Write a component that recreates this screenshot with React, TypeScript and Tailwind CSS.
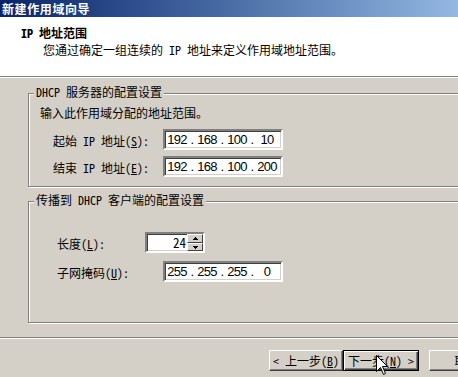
import React, { Fragment } from "react";

const sunken =
  "border-2 border-t-[#808080] border-l-[#808080] border-b-white border-r-white shadow-[inset_1px_1px_0_#404040,inset_-1px_-1px_0_#d4d0c8]";

function Ip({ v }: { v: string[] }) {
  return (
    <div className={`w-[120px] h-[21px] bg-white flex items-center ${sunken} font-['Liberation_Sans',sans-serif] text-[13px] tracking-[-0.8px] leading-none`}>
      {v.map((x, i) => (
        <Fragment key={i}>
          {i > 0 && <span className="w-[6px] text-center">.</span>}
          <span className="w-[24px] text-center">{x}</span>
        </Fragment>
      ))}
    </div>
  );
}

function U({ c }: { c: string }) {
  return <span className="underline underline-offset-[1px]">{c}</span>;
}

function Group({
  label,
  className,
  children,
}: {
  label: string;
  className: string;
  children: React.ReactNode;
}) {
  return (
    <div
      className={`relative border border-[#808080] shadow-[inset_1px_1px_0_#ffffff,1px_1px_0_#ffffff] ${className}`}
    >
      <div className="absolute left-[5px] top-[-8px] px-[2px] bg-[#d4d0c8] leading-[12px]">{label}</div>
      {children}
    </div>
  );
}

function Btn({
  children,
  def,
  className,
}: {
  children: React.ReactNode;
  def?: boolean;
  className: string;
}) {
  return (
    <div
      className={
        def
          ? `h-[21px] flex items-center justify-center border border-black shadow-[inset_1px_1px_0_#ffffff,inset_-1px_-1px_0_#404040,inset_-2px_-2px_0_#808080] ${className}`
          : `h-[21px] flex items-center justify-center border border-t-white border-l-white border-b-[#404040] border-r-[#404040] shadow-[inset_-1px_-1px_0_#808080] ${className}`
      }
    >
      <span className="leading-[12px] whitespace-nowrap">{children}</span>
    </div>
  );
}

export default function App() {
  return (
    <div className="relative w-[458px] h-[377px] overflow-hidden bg-[#d4d0c8] text-black text-[12px] font-['Noto_Sans_CJK_SC',sans-serif] [font-feature-settings:'hwid']">
      <div className="w-[510px] flex flex-col">
        {/* title bar */}
        <div className="h-[17px] bg-linear-to-r from-[#0a246a] to-[#a6caf0] flex items-center pl-[2px]">
          <span className="text-white font-bold leading-[12px] tracking-[0.6px]">新建作用域向导</span>
        </div>
        {/* header */}
        <div className="h-[59px] bg-white pt-[10px] pl-[21px] flex flex-col">
          <div className="font-bold leading-[12px]">IP 地址范围</div>
          <div className="leading-[12px] mt-[5px] pl-[22px]">
            您通过确定一组连续的 IP 地址来定义作用域地址范围。
          </div>
        </div>
        <div className="h-[2px] border-t border-t-[#808080] border-b border-b-white" />
        {/* body */}
        <div className="pt-[15px] px-[28px] flex flex-col">
          <Group label="DHCP 服务器的配置设置" className="h-[94px] flex flex-col">
            <div className="mt-[13px] pl-[11px] leading-[12px]">输入此作用域分配的地址范围。</div>
            <div className="mt-[10px] pl-[24px] flex items-center">
              <div className="w-[110px] leading-[12px] pt-[2px]">
                起始 IP 地址(<U c="S" />):
              </div>
              <Ip v={["192", "168", "100", "10"]} />
            </div>
            <div className="mt-[6px] pl-[24px] flex items-center">
              <div className="w-[110px] leading-[12px] pt-[2px]">
                结束 IP 地址(<U c="E" />):
              </div>
              <Ip v={["192", "168", "100", "200"]} />
            </div>
          </Group>
          <Group label="传播到 DHCP 客户端的配置设置" className="mt-[14px] h-[122px] flex flex-col">
            <div className="mt-[30px] pl-[28px] flex items-center">
              <div className="w-[88px] leading-[12px] pt-[2px]">
                长度(<U c="L" />):
              </div>
              <div className={`w-[60px] h-[21px] bg-white flex ${sunken}`}>
                <div className="flex-1 flex items-center justify-end pr-[1px] leading-[12px] text-[13px]">24</div>
                <div className="w-[16px] flex flex-col">
                  <div className="h-[9px] bg-[#d4d0c8] border border-t-white border-l-white border-b-[#404040] border-r-[#404040] flex items-center justify-center">
                    <svg width="5" height="3" viewBox="0 0 5 3">
                      <path d="M2 0h1v1h1v1h1v1H0V2h1V1h1z" fill="#000" />
                    </svg>
                  </div>
                  <div className="h-[8px] bg-[#d4d0c8] border border-t-white border-l-white border-b-[#404040] border-r-[#404040] flex items-center justify-center">
                    <svg width="5" height="3" viewBox="0 0 5 3">
                      <path d="M0 0h5v1H4v1H3v1H2V2H1V1H0z" fill="#000" />
                    </svg>
                  </div>
                </div>
              </div>
            </div>
            <div className="mt-[8px] pl-[28px] flex items-center">
              <div className="w-[106px] leading-[12px] pt-[2px]">
                子网掩码(<U c="U" />):
              </div>
              <Ip v={["255", "255", "255", "0"]} />
            </div>
          </Group>
        </div>
        <div className="mt-[14px] h-[2px] border-t border-t-[#808080] border-b border-b-white" />
        <div className="mt-[11px] pl-[269px] flex">
          <Btn className="w-[74px]">
            &lt; 上一步(<U c="B" />)
          </Btn>
          <Btn def className="w-[76px]">
            下一步(<U c="N" />) &gt;
          </Btn>
          <Btn className="w-[75px] ml-[10px]">取消</Btn>
        </div>
      </div>
      {/* mouse cursor */}
      <svg
        className="absolute left-[376px] top-[355px]"
        width="13"
        height="21"
        viewBox="0 0 13 21"
      >
        <path
          d="M0.5 0.5 L0.5 16.5 L4.5 12.5 L7.5 19.5 L9.5 18.5 L6.5 11.5 L11.5 11.5 Z"
          fill="#fff"
          stroke="#000"
          strokeWidth="1"
        />
      </svg>
    </div>
  );
}
